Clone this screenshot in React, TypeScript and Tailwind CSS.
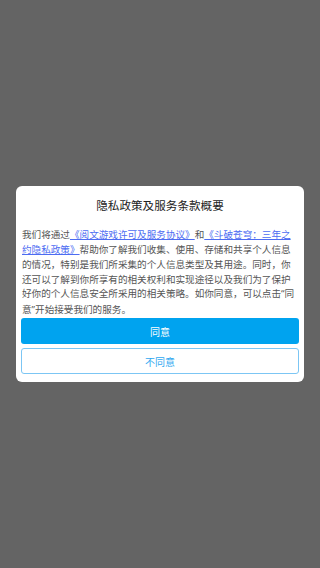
import React from "react";

const font = { fontFamily: '"Noto Sans CJK SC", "Noto Sans", sans-serif' };
const latin = { fontFamily: '"Noto Sans", sans-serif' };

export default function App() {
  return (
    <div
      className="flex h-[568px] w-[320px] items-center justify-center bg-[#646464]"
      style={font}
    >
      <div className="flex w-[288px] flex-col rounded-[6px] bg-white px-[5px] pb-[8px] pt-[9px]">
        <h1 className="text-center text-[11.6px] leading-[20px] text-[#222]">
          隐私政策及服务条款概要
        </h1>
        <p className="mt-[12px] px-[1px] text-[9.6px] leading-[14.9px] text-[#555]">
          我们将通过
          <a className="text-[#4d6cf2] underline">《阅文游戏许可及服务协议》</a>和
          <a className="text-[#4d6cf2] underline">《斗破苍穹：三年之约隐私政策》</a>
          帮助你了解我们收集、使用、存储和共享个人信息的情况，特别是我们所采集的个人信息类型及其用途。同时，你还可以了解到你所享有的相关权利和实现途径以及我们为了保护好你的个人信息安全所采用的相关策略。如你同意，可以点击
          <span style={latin}>“</span>同意<span style={latin}>”</span>
          开始接受我们的服务。
        </p>
        <button className="mt-[0px] h-[26px] w-full rounded-[3px] bg-[#00a3ef] text-[10px] text-white">
          同意
        </button>
        <button className="mt-[4px] h-[26px] w-full rounded-[3px] border border-[#7cc6f4] bg-white text-[10px] text-[#2fa8f0]">
          不同意
        </button>
      </div>
    </div>
  );
}
